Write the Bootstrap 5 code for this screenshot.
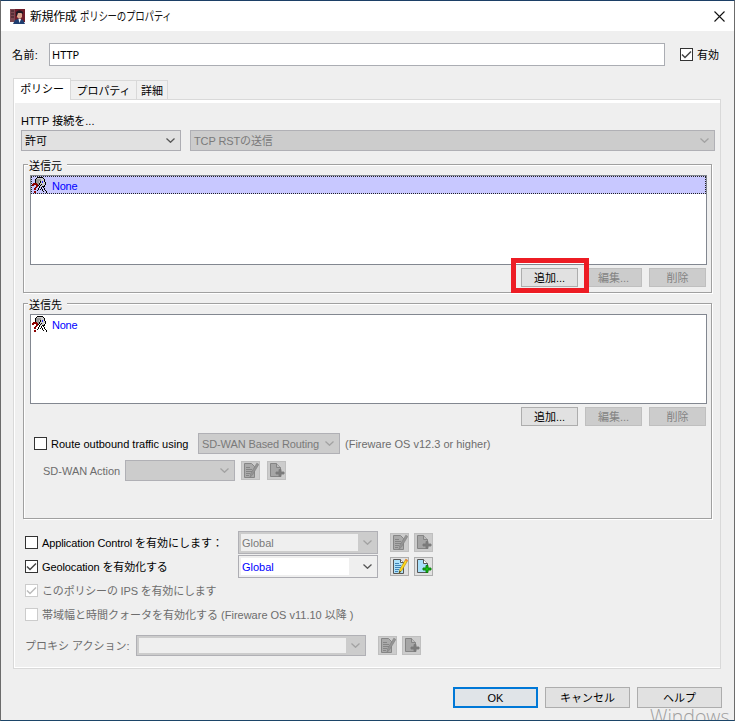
<!DOCTYPE html>
<html lang="ja">
<head>
<meta charset="utf-8">
<meta name="viewport" content="width=device-width, initial-scale=1">
<title>新規作成 ポリシーのプロパティ</title>
<link href="https://cdn.jsdelivr.net/npm/bootstrap@5.3.0/dist/css/bootstrap.min.css" rel="stylesheet">
<style>
body{margin:0;background:#efefef;font:11px/14px "Liberation Sans","Noto Sans CJK JP",sans-serif;color:#000;overflow:hidden}
.dialog{width:735px;height:721px;background:#efefef;border:1px solid #6b6b6b;border-top-color:#1c3f66;border-bottom-color:#1c4568;overflow:hidden}
.titlebar{height:30px;background:#fff;padding:0 9px 0 9px}
.title-text{font-family:"Noto Sans CJK JP",sans-serif;font-size:12px;line-height:28px;margin-left:5px;letter-spacing:-.4px}
.title-kana{transform:scaleX(.79);transform-origin:left;letter-spacing:-.35px;margin-left:4px;color:#111}
.name-row{height:23px;margin:12px 0 0 11px}
.name-label{width:37px;letter-spacing:.4px}
.name-input{width:616px;height:23px;border:1px solid #abadb3;background:#fff;padding-left:2px;font:11px/22px "Noto Sans",sans-serif}
.cb{width:13px;height:13px;border:1px solid #333;background:#fff;flex:none;display:block}
.cb svg{display:block;width:11px;height:11px}
.cb.off{border-color:#ccc}
.tick-on{color:#444}
.tick-off{color:#bbb}
.tabs{height:22px;margin:12px 0 0 12px;position:relative;z-index:1}
.tab-item{height:20px;border:1px solid #d9d9d9;border-left:0;background:#f0f0f0;line-height:20px;text-align:center;letter-spacing:-.1px}
.tab-item.on{height:22px;width:58px;background:#fff;border:1px solid #d9d9d9;border-bottom:0;line-height:20px}
.panel{width:708px;height:570px;margin:-1px 0 0 12px;border:1px solid #d9d9d9;box-shadow:inset 1px 0 #fff,inset 0 -1px #fff,inset 0 3px #fff;padding:14px 0 0 7px}
.combo{height:21px;border:1px solid #adadb3;background:#e1e1e1;padding:0 5px 0 3px;white-space:nowrap;flex:none}
.combo svg{width:9px;height:5px;flex:none;color:#555}
.combo.off{background:#ccc;border-color:#b0b0b5;color:#7a7a7a}
.combo.off svg{color:#a2a2a2}
.edit{height:23px}
.edit>span{align-self:stretch;flex:1;margin:2px 14px 2px -1px;padding-left:1px;line-height:18px}
.edit.off{background:#efefef;box-shadow:inset 0 0 0 2px #ccc,inset -19px 0 #ccc}
.edit.live{background:#efefef}
.edit.live>span{background:#fff;color:#00f}
.group{width:689px;border:1px solid #a0a0a0;box-shadow:1px 1px #fff,inset 1px 1px #fff;padding:0 5px 0 6px;margin-left:2px}
.group-title{width:39px;height:10px;margin-left:-2px;margin-top:-3px;background:#efefef;padding-left:1px;line-height:8px;white-space:nowrap}
.listbox{width:677px;height:90px;border:1px solid #828790;background:#fff;margin-top:3px}
.entry{height:18px;color:#00f;padding-left:1px;letter-spacing:-.25px}
.entry svg{margin-right:4px}
.entry span{padding-top:2px}
.entry.sel{background:#c8c8ff;outline:1px dotted #222;outline-offset:-1px}
.act{width:57px;height:19px;border:1px solid #adadad;background:#e1e1e1;text-align:center;line-height:18px;padding:0;color:#000;font-size:11px}
.act.off{border-color:#bfbfbf;background:#ccc;color:#838383}
.acts{height:19px;gap:7px;margin-top:3px;position:relative}
.callout{position:absolute;right:117px;top:-10px;width:78px;height:35px;border:5px solid #ed1c24}
.ic{width:19px;height:19px;border:1px solid #adadad;background:#e1e1e1;flex:none}
.ic svg{display:block;width:17px;height:17px}
.ic.off{border-color:#bfbfbf;background:#ccc}
.dim{color:#6d6d6d}
.nw{white-space:nowrap;flex:none}
.r1{height:21px;margin:7px 0 0 4px}
.r2{height:21px;margin:6px 0 0 13px}
.opt{padding-left:4px}
.lat{letter-spacing:-.12px}
.foot{gap:7px;margin:18px 12px 0 0}
.foot>button{width:85px;height:21px;border:1px solid #adadad;background:#e1e1e1;padding:0;font-size:11px;line-height:20px;color:#000}
.foot>button.main{border:2px solid #0078d7;line-height:18px;background:#e0e4e8}
.watermark{position:absolute;left:649px;top:704px;height:15px;overflow:hidden;font:300 19.5px/24px "Open Sans",sans-serif;color:#a0a0a0;width:84px}
</style>
</head>
<body>
<svg class="d-none">
<symbol id="chev" viewBox="0 0 9 5"><path d="M.5.5 4.5 4.3 8.5.5" fill="none" stroke="currentColor" stroke-width="1.25"/></symbol>
<symbol id="tick" viewBox="0 0 11 11"><path d="M1 5.5 4 8.5 10 2.5" fill="none" stroke="currentColor" stroke-width="1.5"/></symbol>
<symbol id="who" viewBox="0 0 16 16"><g shape-rendering="crispEdges">
<path d="M5 1h6v1h2v5h-1v2h-3v1H8V8H5z" fill="#ccc"/>
<path d="M4 2h5v2H7v4H5V7H4z" fill="#999"/>
<path d="M5 0h6v1H5zM4 1h1v1H4zM11 1h1v1h-1zM3 2h1v4H3zM12 2h1v3h-1zM8 4h1v2H8zM7 6h1v2H7zM13 5h1v3h-1zM12 8h1v2h-1zM9 7h1v1H9zM6 8h1v1H6zM8 8h1v1H8zM10 9h2v1h-2zM7 9h1v2H7zM9 10h1v2H9zM10 12h1v2h-1zM6 11h1v2H6zM5 13h1v1H5zM8 12h1v1H8zM11 10h1v1h-1zM12 11h1v2h-1zM13 13h1v1h-1zM14 14h1v2h-1zM11 14h1v1h-1z" fill="#000"/>
<path d="M10 4h1v2h-1z" fill="#22f"/>
<path d="M1 6h4v1h1v3H5v1H4v2H2v-2h1v-1h1V8H2v1H0V7h1zM2 14h2v2H2z" fill="#8b0000"/></g></symbol>
<symbol id="ed" viewBox="0 0 17 17"><path d="M2.5 1.5h7l3 3v11h-10z" fill="#aee1fa" stroke="#555"/><path d="M9.500 1.500v3h3" fill="#fff" stroke="#555"/><path d="M4 5.500h4M4 7.500h6M4 9.500h6M4 11.500h4M4 13.500h3" stroke="#3e83b8"/><path d="m14.8 1.2 2 1.2-6 10-2.8 3 .6-3.7z" fill="#ffd91a" stroke="#b48b10" stroke-width=".6"/><path d="m14.8 1 2 1.2-.9 1.5-2-1.2z" fill="#ef873c"/><path d="m8.500 12.800-.500 2.600 2-1.800z" fill="#333"/></symbol>
<symbol id="ad" viewBox="0 0 17 17"><path d="M2.5 1.5h6l4 4v9h-10z" fill="#a9e0fb" stroke="#555"/><path d="M8.500 1.500v4h4" fill="#fff" stroke="#555"/><path d="M11 7.500h2v2.500h3v2h-3v2.500h-2V12H8v-2h3z" fill="#16c016" stroke="#087a08" stroke-width=".9"/></symbol>
<symbol id="edg" viewBox="0 0 17 17"><path d="M2.5 1.5h7l3 3v11h-10z" fill="#aaa" stroke="#868686"/><path d="M4 5.500h4M4 7.500h6M4 9.500h6M4 11.500h4M4 13.500h3" stroke="#858585"/><path d="m14.8 1.2 2 1.2-6 10-2.8 3 .6-3.7z" fill="#949494" stroke="#808080" stroke-width=".6"/></symbol>
<symbol id="adg" viewBox="0 0 17 17"><path d="M2.5 1.5h6l4 4v9h-10z" fill="#a6a6a6" stroke="#858585"/><path d="M8.500 1.500v4h4" fill="#bbb" stroke="#858585"/><path d="M11 7.500h2v2.500h3v2h-3v2.500h-2V12H8v-2h3z" fill="#7c7c7c" stroke="#7c7c7c" stroke-width=".9"/></symbol>
</svg>
<main class="dialog position-relative">
 <header class="titlebar d-flex align-items-center">
  <svg width="15" height="15" viewBox="0 0 15 15"><path d="M0 0h15v13H0z" fill="#6f1d2a"/><path d="M0 0h5v13H0z" fill="#7d4750"/><path d="M1 2h3M1 5h3M1 8h3" stroke="#351820"/><path d="M7 4q3-2 5 0v4l-2 2H9L7 8z" fill="#d9a58e"/><path d="M6 3q3.500-3.500 7 0v2l-2-1H8L7 7H6z" fill="#201824"/><path d="M3 15l2-4 4-1.500 4 1.500 2 4z" fill="#203e70"/><path d="m8.500 10 1 4 1.500-4z" fill="#fff"/></svg>
  <span class="title-text nw">新規作成</span><span class="title-text title-kana nw">ポリシーのプロパティ</span>
  <svg class="ms-auto" width="11" height="11" viewBox="0 0 11 11"><path d="M.5.5l10 10M10.500.500l-10 10" stroke="#111" stroke-width="1.1"/></svg>
 </header>
 <div class="name-row d-flex align-items-center">
  <span class="name-label nw">名前:</span><div class="name-input">HTTP</div>
  <span class="cb tick-on" style="margin-left:15px"><svg><use href="#tick"/></svg></span><span class="nw" style="margin-left:4px">有効</span>
 </div>
 <nav class="tabs d-flex align-items-end">
  <div class="tab-item on">ポリシー</div><div class="tab-item" style="width:66px">プロパティ</div><div class="tab-item" style="width:31px">詳細</div>
 </nav>
 <section class="panel">
  <div class="nw"><span class="lat">HTTP</span> 接続を...</div>
  <div class="d-flex" style="gap:9px;margin-top:2px">
   <div class="combo d-flex align-items-center justify-content-between" style="width:160px"><span>許可</span><svg><use href="#chev"/></svg></div>
   <div class="combo off d-flex align-items-center justify-content-between" style="width:525px"><span class="lat">TCP RSTの送信</span><svg><use href="#chev"/></svg></div>
  </div>
  <div class="group" style="height:129px;margin-top:13px">
   <div class="group-title">送信元</div>
   <div class="listbox"><div class="entry sel d-flex align-items-center"><svg width="16" height="16"><use href="#who"/></svg><span>None</span></div></div>
   <div class="acts d-flex justify-content-end"><button class="act">追加...</button><button class="act off">編集...</button><button class="act off">削除</button><div class="callout"></div></div>
  </div>
  <div class="group" style="height:216px;margin-top:10px">
   <div class="group-title">送信先</div>
   <div class="listbox"><div class="entry d-flex align-items-center"><svg width="16" height="16"><use href="#who"/></svg><span>None</span></div></div>
   <div class="acts d-flex justify-content-end"><button class="act">追加...</button><button class="act off">編集...</button><button class="act off">削除</button></div>
   <div class="r1 d-flex align-items-center"><span class="cb"></span><span class="nw" style="width:147px;margin-left:4px">Route outbound traffic using</span>
    <div class="combo off d-flex align-items-center justify-content-between" style="width:142px"><span class="lat">SD-WAN Based Routing</span><svg><use href="#chev"/></svg></div>
    <span class="dim nw" style="margin-left:5px">(Fireware OS v12.3 or higher)</span></div>
   <div class="r2 d-flex align-items-center"><span class="dim nw" style="width:82px">SD-WAN Action</span>
    <div class="combo off d-flex align-items-center justify-content-end" style="width:110px"><svg><use href="#chev"/></svg></div>
    <span class="ic off" style="margin-left:6px"><svg><use href="#edg"/></svg></span><span class="ic off" style="margin-left:7px"><svg><use href="#adg"/></svg></span></div>
  </div>
  <div class="opt d-flex align-items-center" style="height:23px;margin-top:12px"><span class="cb"></span><span class="nw" style="width:196px;margin-left:4px"><span class="lat">Application Control</span> を有効にします：</span>
   <div class="combo edit off d-flex align-items-center" style="width:140px"><span>Global</span><svg><use href="#chev"/></svg></div>
   <span class="ic off" style="margin-left:12px"><svg><use href="#edg"/></svg></span><span class="ic off" style="margin-left:5px"><svg><use href="#adg"/></svg></span></div>
  <div class="opt d-flex align-items-center" style="height:23px;margin-top:1px"><span class="cb tick-on"><svg><use href="#tick"/></svg></span><span class="nw" style="width:196px;margin-left:4px"><span class="lat">Geolocation</span> <span class="lat">を有効化する</span></span>
   <div class="combo edit live d-flex align-items-center" style="width:140px"><span>Global</span><svg><use href="#chev"/></svg></div>
   <span class="ic" style="margin-left:12px"><svg><use href="#ed"/></svg></span><span class="ic" style="margin-left:5px"><svg><use href="#ad"/></svg></span></div>
  <div class="opt d-flex align-items-center dim" style="height:15px;margin-top:5px"><span class="cb off tick-off"><svg><use href="#tick"/></svg></span><span class="nw" style="margin-left:4px;letter-spacing:-.18px">このポリシーの IPS を有効にします</span></div>
  <div class="opt d-flex align-items-center dim" style="height:15px;margin-top:9px"><span class="cb off"></span><span class="nw" style="margin-left:4px">帯域幅と時間クォータを有効化する (Fireware OS v11.10 以降 )</span></div>
  <div class="opt d-flex align-items-center" style="height:21px;margin-top:13px"><span class="nw dim" style="width:111px">プロキシ アクション:</span>
   <div class="combo edit off d-flex align-items-center" style="width:230px;height:21px"><span></span><svg><use href="#chev"/></svg></div>
   <span class="ic off" style="margin-left:12px"><svg><use href="#edg"/></svg></span><span class="ic off" style="margin-left:5px"><svg><use href="#adg"/></svg></span></div>
 </section>
 <footer class="foot d-flex justify-content-end"><button class="main">OK</button><button>キャンセル</button><button>ヘルプ</button></footer>
 <div class="watermark">Windows</div>
</main>
<script src="https://cdn.jsdelivr.net/npm/bootstrap@5.3.0/dist/js/bootstrap.bundle.min.js"></script>
</body>
</html>
